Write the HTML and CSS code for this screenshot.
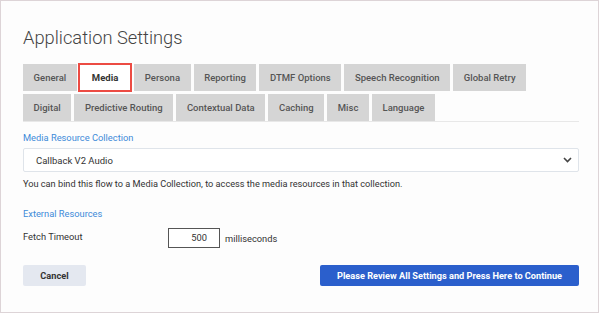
FILE: index.html
```html
<!DOCTYPE html>
<html>
<head>
<meta charset="utf-8">
<link rel="stylesheet" href="styles.css">
</head>
<body>
<div class="frame">
  <h1 class="title">Application Settings</h1>
  <div class="tabs">
    <div class="tab-row">
      <div class="tab">General</div>
      <div class="tab active">Media</div>
      <div class="tab">Persona</div>
      <div class="tab">Reporting</div>
      <div class="tab">DTMF Options</div>
      <div class="tab">Speech Recognition</div>
      <div class="tab">Global Retry</div>
    </div>
    <div class="tab-row">
      <div class="tab">Digital</div>
      <div class="tab">Predictive Routing</div>
      <div class="tab">Contextual Data</div>
      <div class="tab">Caching</div>
      <div class="tab">Misc</div>
      <div class="tab">Language</div>
    </div>
  </div>
  <div class="section-label first">Media Resource Collection</div>
  <div class="select">
    <span>Callback V2 Audio</span>
    <svg class="chev" width="9" height="6" viewBox="0 0 9 6"><path d="M1 1l3.5 3.5L8 1" fill="none" stroke="#444" stroke-width="1.6"/></svg>
  </div>
  <div class="help">You can bind this flow to a Media Collection, to access the media resources in that collection.</div>
  <div class="section-label second">External Resources</div>
  <div class="field">
    <span class="field-label">Fetch Timeout</span>
    <div class="num">500</div>
    <span class="unit">milliseconds</span>
  </div>
  <div class="actions">
    <button class="btn cancel">Cancel</button>
    <button class="btn primary">Please Review All Settings and Press Here to Continue</button>
  </div>
</div>
</body>
</html>
```
FILE: styles.css
```css
html, body { margin: 0; padding: 0; background: #fff; }
.frame {
  width: 599px;
  height: 313px;
  box-sizing: border-box;
  border: 1px solid #ddd4d7;
  background: #fdfdfd;
  padding: 23px 19px 0 22px;
  font-family: Roboto, "Liberation Sans", sans-serif;
}
.title {
  margin: 0;
  font-size: 18.3px;
  font-weight: 300;
  color: #444;
  line-height: 28px;
}
.tabs {
  margin-top: 12px;
  display: flex;
  flex-direction: column;
  gap: 3px;
  border-bottom: 1px solid #e8e8e8;
}
.tab-row {
  display: flex;
  gap: 3px;
}
.tab {
  height: 27px;
  padding: 0 10.6px;
  background: #d5d5d5;
  color: #555;
  font-size: 9.5px;
  font-weight: 500;
  display: flex;
  align-items: center;
  box-sizing: border-box;
  white-space: nowrap;
}
.tab.active {
  background: #fff;
  border: 2px solid #ec4b43;
  height: 29px;
  margin: -1px -1px -1px -2px;
  color: #333;
  font-weight: 700;
  padding: 0 12px;
}
.section-label {
  color: #3d8bd9;
  font-size: 9.3px;
  line-height: 12px;
}
.section-label.first { margin-top: 10px; }
.section-label.second { margin-top: 18px; }
.select {
  margin-top: 4px;
  height: 24px;
  box-sizing: border-box;
  border: 1px solid #dfe4ea;
  background: #fff;
  border-radius: 2px;
  display: flex;
  align-items: center;
  justify-content: space-between;
  padding: 0 6px 0 12px;
  font-size: 9.5px;
  color: #333;
}
.help {
  margin-top: 6px;
  font-size: 9.2px;
  color: #333;
  line-height: 12px;
}
.field {
  margin-top: 8px;
  display: flex;
  align-items: center;
  font-size: 9.3px;
  color: #333;
}
.field-label { width: 145px; margin-top: -4px; }
.num {
  width: 52px;
  height: 20px;
  box-sizing: border-box;
  border: 1px solid #555;
  background: #fff;
  text-align: right;
  padding-right: 12px;
  line-height: 18px;
}
.unit { margin-left: 5px; }
.actions {
  margin-top: 17px;
  display: flex;
  justify-content: space-between;
}
.btn {
  height: 21px;
  border: none;
  border-radius: 2px;
  font-family: Roboto, "Liberation Sans", sans-serif;
  font-size: 9.2px;
  font-weight: 700;
  padding: 0;
}
.cancel {
  width: 63px;
  background: #e4e8f0;
  color: #333;
}
.primary {
  width: 259px;
  background: #2b5fcc;
  color: #fff;
}
```
